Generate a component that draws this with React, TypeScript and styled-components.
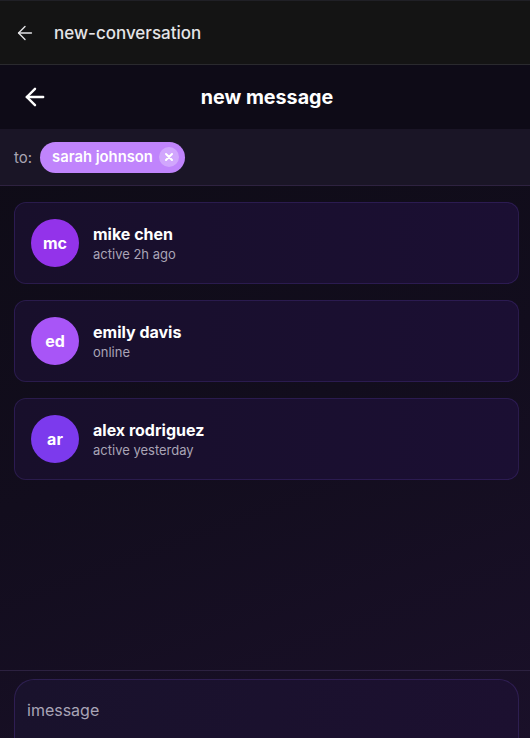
import React from "react";
import styled, { createGlobalStyle } from "styled-components";

const Global = createGlobalStyle`
  html, body { margin: 0; padding: 0; background: #0f0c17; }
  body { font-family: Inter, "Noto Sans", sans-serif; -webkit-font-smoothing: antialiased; }
  * { box-sizing: border-box; }
`;

const Page = styled.div`
  width: 530px;
  height: 738px;
  overflow: hidden;
  display: flex;
  flex-direction: column;
  background: linear-gradient(160deg, #0d0b14 0%, #120d1d 55%, #1a1029 100%);
`;

const TopBar = styled.div`
  height: 65px;
  flex: none;
  display: flex;
  align-items: center;
  gap: 18px;
  padding: 0 14px;
  background: #141414;
  border-top: 1px solid #202026;
  border-bottom: 1px solid #2a2a2e;
  color: #e4e4e7;
  font-size: 17px;
  font-weight: 500;
`;

const Header = styled.div`
  height: 64px;
  flex: none;
  display: grid;
  grid-template-columns: 60px 1fr 60px;
  align-items: center;
  background: #0e0b17;
  padding: 0 0 0 21px;
`;

const Title = styled.div`
  text-align: center;
  color: #ffffff;
  font-size: 19.7px;
  font-weight: 700;
  margin-right: 17px;
`;

const ToRow = styled.div`
  height: 57px;
  flex: none;
  display: flex;
  align-items: center;
  gap: 8px;
  padding: 0 14px;
  background-color: #1a1526;
  border-bottom: 1px solid #2e2240;
  color: #a8a4b3;
  font-size: 15px;
`;

const Chip = styled.div`
  height: 31px;
  display: flex;
  align-items: center;
  gap: 6px;
  padding: 0 6px 0 12px;
  border-radius: 16px;
  background: #c084fc;
  color: #ffffff;
  font-size: 14.8px;
  font-weight: 600;
`;

const ChipClose = styled.span`
  width: 20px;
  height: 20px;
  border-radius: 50%;
  background: rgba(255, 255, 255, 0.28);
  display: flex;
  align-items: center;
  justify-content: center;
`;

const List = styled.div`
  flex: 1;
  display: flex;
  flex-direction: column;
  gap: 16px;
  padding: 16px 11px 0 14px;
`;

const Card = styled.div`
  height: 82px;
  display: flex;
  align-items: center;
  gap: 14px;
  padding: 0 16px;
  border-radius: 12px;
  border: 1px solid rgba(139, 92, 246, 0.16);
  background: linear-gradient(90deg, #180f2b 0%, #1b0f33 100%);
`;

const Avatar = styled.div<{ $bg: string }>`
  width: 48px;
  height: 48px;
  flex: none;
  border-radius: 50%;
  background: ${(p) => p.$bg};
  color: #fff;
  font-size: 16px;
  font-weight: 700;
  display: flex;
  align-items: center;
  justify-content: center;
`;

const Info = styled.div`
  display: flex;
  flex-direction: column;
  gap: 2px;
`;

const Name = styled.div`
  color: #ffffff;
  font-size: 16px;
  font-weight: 700;
  line-height: 20px;
`;

const Status = styled.div`
  color: #a9a4b6;
  font-size: 13px;
  line-height: 17px;
`;

const Footer = styled.div`
  flex: none;
  height: 68px;
  padding: 8px 11px 0 14px;
  border-top: 1px solid #2c2140;
`;

const InputBox = styled.div`
  height: 90px;
  border-radius: 20px;
  border: 1px solid rgba(139, 92, 246, 0.18);
  background: linear-gradient(100deg, #19122c 0%, #1c1030 100%);
  padding: 20px 12px;
  color: #a9a4b6;
  font-size: 16px;
`;

const contacts = [
  { initials: "mc", name: "mike chen", status: "active 2h ago", color: "#9333ea" },
  { initials: "ed", name: "emily davis", status: "online", color: "#a855f7" },
  { initials: "ar", name: "alex rodriguez", status: "active yesterday", color: "#7c3aed" },
];

const Arrow = ({ size, stroke, color }: { size: number; stroke: number; color: string }) => (
  <svg width={size} height={size} viewBox="0 0 24 24" fill="none" stroke={color} strokeWidth={stroke} strokeLinecap="round" strokeLinejoin="round">
    <path d="M19 12H5" />
    <path d="M12 19l-7-7 7-7" />
  </svg>
);

export default function App() {
  return (
    <>
      <Global />
      <Page>
        <TopBar>
          <Arrow size={22} stroke={1.5} color="#e4e4e7" />
          <span>new-conversation</span>
        </TopBar>
        <Header>
          <Arrow size={28} stroke={2.1} color="#ffffff" />
          <Title>new message</Title>
          <span />
        </Header>
        <ToRow>
          <span>to:</span>
          <Chip>
            sarah johnson
            <ChipClose>
              <svg width="10" height="10" viewBox="0 0 10 10" stroke="#fff" strokeWidth="2" strokeLinecap="round">
                <path d="M2 2l6 6M8 2l-6 6" />
              </svg>
            </ChipClose>
          </Chip>
        </ToRow>
        <List>
          {contacts.map((c) => (
            <Card key={c.initials}>
              <Avatar $bg={c.color}>{c.initials}</Avatar>
              <Info>
                <Name>{c.name}</Name>
                <Status>{c.status}</Status>
              </Info>
            </Card>
          ))}
        </List>
        <Footer>
          <InputBox>imessage</InputBox>
        </Footer>
      </Page>
    </>
  );
}
